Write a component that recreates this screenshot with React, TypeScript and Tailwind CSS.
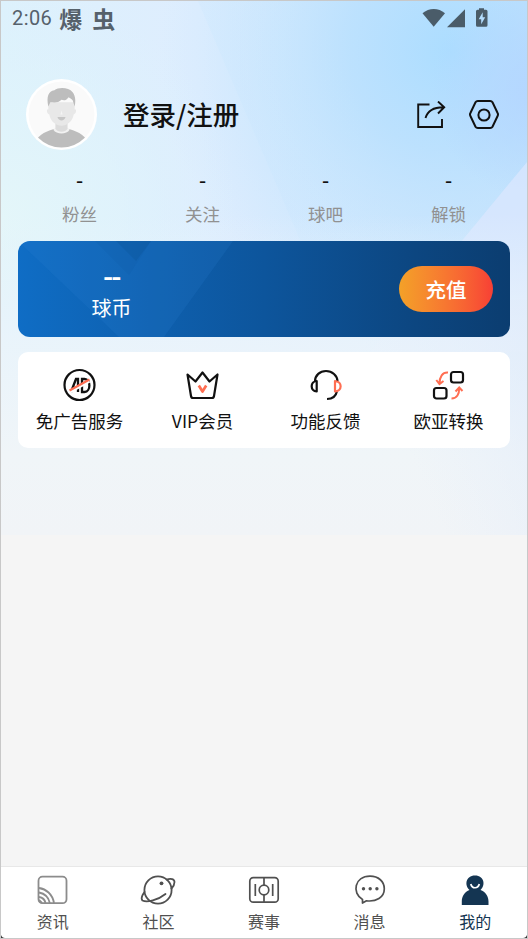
import type { ReactNode } from 'react';

type Item = {
  label: string;
  icon: ReactNode;
};

const stats = ['粉丝', '关注', '球吧', '解锁'];

const services: Item[] = [
  { label: '免广告服务', icon: <NoAdIcon /> },
  { label: 'VIP会员', icon: <CrownIcon /> },
  { label: '功能反馈', icon: <HeadsetIcon /> },
  { label: '欧亚转换', icon: <ConvertIcon /> },
];

const tabs: Item[] = [
  { label: '资讯', icon: <NewsIcon /> },
  { label: '社区', icon: <PlanetIcon /> },
  { label: '赛事', icon: <PitchIcon /> },
  { label: '消息', icon: <MessageIcon /> },
  { label: '我的', icon: <MineIcon /> },
];

function Backdrop() {
  return (
    <svg className="absolute left-0 top-0 -z-10 h-[534px] w-full" viewBox="1 1 526 534" preserveAspectRatio="none">
      <defs>
        <linearGradient id="base" x1="0" y1="0" x2="1" y2="0">
          <stop offset="0" stopColor="#ddf1fc" />
          <stop offset="0.38" stopColor="#deedfe" />
          <stop offset="1" stopColor="#cbe3fd" />
        </linearGradient>
        <radialGradient id="sky" gradientUnits="userSpaceOnUse" cx="450" cy="50" r="290">
          <stop offset="0" stopColor="#acddff" />
          <stop offset="0.35" stopColor="#b8e0fe" stopOpacity="0.85" />
          <stop offset="1" stopColor="#c8e8fd" stopOpacity="0" />
        </radialGradient>
        <radialGradient id="corner" gradientUnits="userSpaceOnUse" cx="540" cy="90" r="110">
          <stop offset="0" stopColor="#b4d6ff" />
          <stop offset="1" stopColor="#b4d6ff" stopOpacity="0" />
        </radialGradient>
        <radialGradient id="mint" gradientUnits="userSpaceOnUse" cx="0" cy="220" r="240">
          <stop offset="0" stopColor="#e4f6f9" />
          <stop offset="0.5" stopColor="#e0f4fb" stopOpacity="0.7" />
          <stop offset="1" stopColor="#dcf2fc" stopOpacity="0" />
        </radialGradient>
        <linearGradient id="fade" x1="0" y1="0" x2="0" y2="1">
          <stop offset="0.4" stopColor="#e9f4fb" stopOpacity="0" />
          <stop offset="0.63" stopColor="#ebf4fb" stopOpacity="0.85" />
          <stop offset="0.85" stopColor="#f0f5f8" />
          <stop offset="1" stopColor="#f1f4f7" />
        </linearGradient>
        <linearGradient id="ray" gradientUnits="userSpaceOnUse" x1="235" y1="80" x2="340" y2="40">
          <stop offset="0" stopColor="#c4e5fe" stopOpacity="0.2" />
          <stop offset="1" stopColor="#c4e5fe" stopOpacity="0" />
        </linearGradient>
        <linearGradient id="side" gradientUnits="userSpaceOnUse" x1="400" y1="430" x2="540" y2="370">
          <stop offset="0" stopColor="#e3edfc" stopOpacity="0" />
          <stop offset="1" stopColor="#e0ebfb" />
        </linearGradient>
      </defs>
      <rect x="1" y="1" width="526" height="534" fill="url(#base)" />
      <rect x="1" y="1" width="526" height="534" fill="url(#sky)" />
      <rect x="1" y="1" width="526" height="534" fill="url(#corner)" />
      <rect x="1" y="1" width="526" height="534" fill="url(#mint)" />
      <path d="M198 1H527V240H300Z" fill="url(#ray)" />
      <path d="M527 162L465 237L370 352L527 352Z" fill="#dbe7fe" opacity="0.75" />
      <rect x="1" y="1" width="526" height="534" fill="url(#fade)" />
      <rect x="340" y="300" width="187" height="235" fill="url(#side)" opacity="0.6" />
    </svg>
  );
}

function StatusBar() {
  return (
    <div className="flex h-[34px] items-center justify-between pl-[11px] pr-[39px] text-[#56616b]">
      <div className="flex items-center">
        <span className="font-['Roboto',sans-serif] text-[20px] leading-none tracking-[0.4px]">2:06</span>
        <span className="ml-[7px] text-[23px] font-bold leading-none">爆</span>
        <span className="ml-[10px] text-[23px] font-bold leading-none">虫</span>
      </div>
      <svg className="h-5 w-[66px]" viewBox="422 7.300 66 20" fill="#4a5c69">
        <path d="M422.5 12.6C429 6.8 438.500 6.800 445 12.600L433.700 26Z" />
        <path d="M465 8.500V26.500H447Z" />
        <path fillRule="evenodd" d="M479 7.500H484V9H486Q487.500 9 487.500 10.500V24.500Q487.500 26 486 26H477.500Q476 26 476 24.500V10.500Q476 9 477.500 9H479ZM482.700 11.500L478.700 18.500H481.200V23.500L485.200 16.500H482.700Z" />
      </svg>
    </div>
  );
}

function Avatar() {
  return (
    <svg className="size-[71px]" viewBox="0 0 70 70">
      <defs>
        <clipPath id="face-clip">
          <circle cx="35" cy="35" r="32.500" />
        </clipPath>
      </defs>
      <circle cx="35" cy="35" r="35" fill="#fff" />
      <circle cx="35" cy="35" r="32.500" fill="#fafafa" />
      <g clipPath="url(#face-clip)">
        <path d="M9 62C13 54 21 51 29 49H41C49 51 57 54 61 62V70H9Z" fill="#bdbdbd" />
        <path d="M27 50C30 55 40 55 43 50L41 48H29Z" fill="#f2f2f2" />
        <path d="M29 41H41V49C39 53 31 53 29 49Z" fill="#dcdcdc" />
        <path d="M22 23H48V30C50 29 50 34 47 35C46 42 40 46 35 46S24 42 23 35C20 34 20 29 22 30Z" fill="#e8e8e8" />
        <path d="M22 27C20 17 22 12 28 11C32 8 42 8 46 13C49 17 49 22 48 27L46 21C44 19 43 18.500 42 18C39 22 37 21 35 20.500C32 24 27 23 24 23Z" fill="#bdbdbd" />
        <path d="M35 31L36 35H34Z" fill="#f5f5f5" />
        <path d="M31 37.500H39C38 42 32 42 31 37.500Z" fill="#c6c6c6" />
      </g>
    </svg>
  );
}

function ShareIcon() {
  return (
    <svg className="h-[28px] w-[30px]" viewBox="416 101 30 28" fill="none" stroke="#111" strokeWidth="1.900">
      <path d="M429.500 104.500H418.200V127H442V119" />
      <path d="M425.500 118C427.500 111 434 107 444 107.200M438 101.500L444.200 107.200L438 113.500" />
    </svg>
  );
}

function SettingsIcon() {
  return (
    <svg className="size-[30px]" viewBox="469 99.500 30 30" fill="none" stroke="#111" strokeWidth="2">
      <path d="M477.800 100.500H490.200Q491.700 100.500 492.500 101.800L497.600 112.500Q498.400 114 497.600 115.500L492.500 126.200Q491.700 127.500 490.200 127.500H477.800Q476.300 127.500 475.500 126.200L470.400 115.500Q469.600 114 470.400 112.500L475.500 101.800Q476.300 100.500 477.800 100.500Z" />
      <circle cx="484" cy="114.500" r="5.600" />
    </svg>
  );
}

function NoAdIcon() {
  return (
    <svg className="size-9" viewBox="0.500 0 36 36" fill="none" stroke="#111">
      <circle cx="18" cy="18" r="15" strokeWidth="2.200" />
      <path d="M9.500 25L14.500 12H16.500V25M12 21H16.500M20.500 12H23C29.500 12 29.500 25 23 25H20.500Z" strokeWidth="2.300" />
      <path d="M8 25.500L28 14.500" stroke="#fff" strokeWidth="2.500" />
      <path d="M8 23.500L28 12.500" stroke="#ff6e52" strokeWidth="2.200" />
    </svg>
  );
}

function CrownIcon() {
  return (
    <svg className="size-9" viewBox="0.500 0 36 36" fill="none" strokeLinejoin="round">
      <path d="M3 7.500L11 14.500L18 5.500L25 14.500L33 7.500L29.500 29Q29.200 31 27.500 31H8.500Q6.800 31 6.500 29Z" stroke="#111" strokeWidth="2.200" />
      <path d="M14.300 18.500L18 24.500L21.700 18.500" stroke="#ff6e52" strokeWidth="2.700" />
    </svg>
  );
}

function HeadsetIcon() {
  return (
    <svg className="size-9" viewBox="0 0 36 36" fill="none" strokeWidth="2.200">
      <path d="M7 14.500C7 8 12 4 18 4S29.500 8.500 29.500 14.500M29 24C28 29 24.500 32 19 32" stroke="#111" />
      <path d="M8.700 14V24.500C2 24 2 14.500 8.700 14Z" stroke="#111" strokeLinejoin="round" />
      <path d="M27 14V24.500C34.500 24 34.500 14.500 27 14Z" stroke="#ff6e52" strokeLinejoin="round" />
    </svg>
  );
}

function ConvertIcon() {
  return (
    <svg className="size-9" viewBox="0 0 36 36" fill="none" strokeWidth="2.200">
      <rect x="20" y="5" width="12" height="10.500" rx="2.500" stroke="#111" />
      <rect x="3" y="21" width="12.500" height="10.500" rx="2.500" stroke="#111" />
      <path d="M17 5.500C11.500 5 8.500 10 8.500 16.500M5.300 13L8.500 17L12.500 14M20.500 31.500C26 31.500 28.300 27 28.200 21M24.500 24.500L28.200 20.500L31.500 24" stroke="#ff6e52" strokeWidth="2" />
    </svg>
  );
}

function NewsIcon() {
  return (
    <svg className="size-9" viewBox="0 0 36 36" fill="none" stroke="#8c8c8c" strokeWidth="1.800">
      <rect x="3.500" y="4.700" width="28" height="26.500" rx="4" />
      <path d="M4 16C11 17 17.500 22 19 31M4 20.500C9.500 21.500 13.500 25 14.800 31M4 25C7.500 25.500 9.800 27.500 10.500 31M4 28L7 31" />
    </svg>
  );
}

function PlanetIcon() {
  return (
    <svg className="size-9" viewBox="0 0 36 36" fill="none" stroke="#505050" strokeWidth="1.800" strokeLinecap="round">
      <circle cx="18" cy="18" r="13.600" />
      <path d="M26.500 7.500C31 6 34.500 7 34.500 10C34.500 12 33 15 31.500 16.500M4.500 20C2 23.500 1 27 2.500 28.500C7 31 18 28 25.500 22" />
      <circle cx="21.500" cy="11.300" r="1.900" fill="#505050" stroke="none" />
    </svg>
  );
}

function PitchIcon() {
  return (
    <svg className="size-9" viewBox="0 0 36 36" fill="none" stroke="#505050" strokeWidth="1.700">
      <rect x="3.800" y="5.700" width="28.400" height="24.500" rx="3.500" />
      <circle cx="18" cy="18" r="4.800" />
      <path d="M18 6V13M18 23V30M9.300 12V24M26.700 12V24" />
    </svg>
  );
}

function MessageIcon() {
  return (
    <svg className="size-9" viewBox="0 0 36 36" fill="none" stroke="#505050" strokeWidth="1.700" strokeLinejoin="round">
      <path d="M10.500 31V27.500C-0.500 21 2.500 4.200 18 4.200C26.500 4.200 32.300 9.500 32.300 16.700C32.300 25.500 24 30 14.500 28.800Z" />
      <g fill="#505050" stroke="none">
        <circle cx="11.500" cy="16.800" r="1.700" />
        <circle cx="18.200" cy="16.800" r="1.700" />
        <circle cx="24.900" cy="16.800" r="1.700" />
      </g>
    </svg>
  );
}

function MineIcon() {
  return (
    <svg className="size-9" viewBox="0 0 36 36" fill="#143552">
      <path d="M12.500 18C7.300 13.500 8.500 3.500 18 3.500S28.700 13.500 23.500 18C28.500 20 31.500 24 31.500 29.500V33H4.800V29.500C4.800 24 7.800 20 12.500 18Z" />
      <path d="M13.800 12C15 17 21 17 22.300 12" fill="none" stroke="#fff" strokeWidth="1.700" />
    </svg>
  );
}

export default function App() {
  return (
    <div className="relative isolate flex h-[939px] w-[528px] flex-col overflow-hidden border border-[#c8c8c8] bg-[#f5f5f5] font-['Noto_Sans_CJK_SC',sans-serif] text-[#111]">
      <Backdrop />
      <StatusBar />

      <header className="mt-[44px] flex h-[71px] items-center pl-[25px] pr-[28px]">
        <Avatar />
        <h1 className="ml-[26px] flex-1 text-[26.500px] font-medium leading-none">登录/注册</h1>
        <ShareIcon />
        <span className="ml-[23px]">
          <SettingsIcon />
        </span>
      </header>

      <section className="mx-[17px] mt-[17px] grid h-[74px] grid-cols-4 text-center">
        {stats.map((label) => (
          <div key={label}>
            <div className="h-[25px] text-[20px] font-medium leading-[25px]">-</div>
            <div className="mt-[9px] text-[17.500px] leading-[26px] text-[#919191]">{label}</div>
          </div>
        ))}
      </section>

      {/* coin balance */}
      <section className="relative isolate mx-[17px] flex h-[96px] items-center justify-between overflow-hidden rounded-xl bg-linear-to-r from-[#0f6dc5] via-[#0d559c] to-[#0b3d70] pr-[17px] text-white">
        <svg className="absolute left-0 top-0 -z-10 h-full w-[220px]" viewBox="0 0 220 96">
          <path d="M0 0H215L146 96H101Z" fill="#3080d8" opacity="0.17" />
          <path d="M77 0H133L111 34Z" fill="#064f91" opacity="0.1" />
          <path d="M98 0H133L118 20Z" fill="#064f91" opacity="0.25" />
        </svg>
        <div className="w-[187px] pt-[5px] text-center">
          <div className="pt-[2px] font-['Roboto',sans-serif] text-[29px] font-medium leading-[28px] tracking-[-1.500px]">--</div>
          <div className="mt-[2px] text-[20px] leading-[28px]">球币</div>
        </div>
        <button className="h-[46px] w-[94px] rounded-full bg-linear-to-r from-[#f3a128] to-[#f73f35] pt-[1px] text-[20.500px] font-medium">充值</button>
      </section>

      <section className="mx-[17px] mt-[15px] grid h-[96px] grid-cols-4 rounded-[10px] bg-white">
        {services.map(({ label, icon }) => (
          <div key={label} className="flex flex-col items-center pt-[15px]">
            {icon}
            <span className="mt-[5px] text-[17.500px] leading-[26px]">{label}</span>
          </div>
        ))}
      </section>

      <nav className="-mx-px mt-auto grid h-[72px] grid-cols-5 border-t border-[#e8e8e8] bg-white">
        {tabs.map(({ label, icon }) => (
          <div
            key={label}
            className={`flex flex-col items-center pt-[5px] ${label === '我的' ? 'text-[#143552]' : 'text-[#505050]'}`}
          >
            {icon}
            <span className="mt-[1px] text-[16px] leading-6">{label}</span>
          </div>
        ))}
      </nav>

      {/* dark screen corners */}
      <svg className="absolute bottom-0 left-0 h-[3px] w-full" viewBox="0 0 526 3" fill="#333">
        <path d="M0 0Q1 3 4 3H0ZM526 0Q525 3 522 3H526Z" />
      </svg>
    </div>
  );
}
